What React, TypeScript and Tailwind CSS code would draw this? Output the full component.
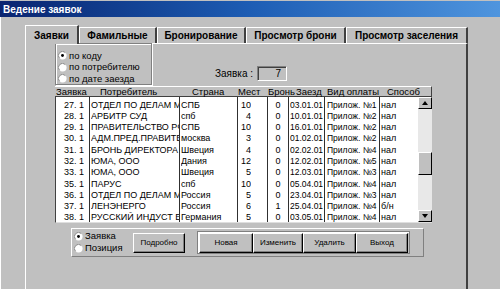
const rows = [
  ['27. 1', 'ОТДЕЛ ПО ДЕЛАМ МОЛОДЕЖИ', 'СПБ', '10', '0', '03.01.01', 'Прилож. №1', 'нал'],
  ['28. 1', 'АРБИТР СУД', 'спб', '4', '0', '10.01.01', 'Прилож. №2', 'нал'],
  ['29. 1', 'ПРАВИТЕЛЬСТВО РФ', 'СПБ', '10', '0', '16.01.01', 'Прилож. №2', 'нал'],
  ['30. 1', 'АДМ.ПРЕД.ПРАВИТЕЛЬСТВА', 'москва', '3', '0', '01.02.01', 'Прилож. №2', 'нал'],
  ['31. 1', 'БРОНЬ ДИРЕКТОРА', 'Швеция', '4', '0', '02.02.01', 'Прилож. №4', 'нал'],
  ['32. 1', 'ЮМА, ООО', 'Дания', '12', '0', '12.02.01', 'Прилож. №5', 'нал'],
  ['33. 1', 'ЮМА, ООО', 'Швеция', '5', '0', '12.03.01', 'Прилож. №3', 'нал'],
  ['35. 1', 'ПАРУС', 'спб', '10', '0', '05.04.01', 'Прилож. №4', 'нал'],
  ['36. 1', 'ОТДЕЛ ПО ДЕЛАМ МОЛОДЕЖИ', 'Россия', '5', '0', '23.04.01', 'Прилож. №3', 'нал'],
  ['37. 1', 'ЛЕНЭНЕРГО', 'Россия', '6', '1', '25.04.01', 'Прилож. №4', 'б/н'],
  ['38. 1', 'РУССКИЙ ИНДУСТ БАНК', 'Германия', '5', '0', '03.05.01', 'Прилож. №4', 'нал'],
]

// body columns: width incl. right line, text alignment
const cols = [
  { w: 'w-[34px]', cls: 'text-right pr-[5px] border-r' },
  { w: 'w-[90px]', cls: 'pl-[1px] border-r' },
  { w: 'w-[58px]', cls: 'pl-[1px] border-r' },
  { w: 'w-[30px]', cls: 'text-right pr-[16px] border-r' },
  { w: 'w-[21px]', cls: 'text-center border-r' },
  { w: 'w-[36px]', cls: 'pl-[1px] border-r text-[8.5px]' },
  { w: 'w-[55px]', cls: 'pl-[2px] border-r text-[8.5px]' },
  { w: 'w-[38px]', cls: 'pl-[1px]' },
]

const Radio = ({ checked }: { checked?: boolean }) => (
  <svg width="9" height="9" viewBox="0 0 10 10" className="shrink-0">
    <circle cx="5" cy="5" r="4.5" fill="#fff" />
    <path d="M1.8 8.2 A4.5 4.5 0 0 1 8.2 1.8" stroke="#808080" fill="none" />
    {checked && <circle cx="5" cy="5" r="1.6" fill="#000" />}
  </svg>
)

const Btn = ({ label, w }: { label: string; w: string }) => (
  <div className={`${w} h-[20px] flex items-center justify-center bg-[#c0c0c0] border border-t-white border-l-white border-r-black border-b-black shadow-[inset_-1px_-1px_0_#808080] text-[8px]`}>
    {label}
  </div>
)

const Arrow = ({ up }: { up?: boolean }) => (
  <div className="h-[12px] w-full flex items-center justify-center bg-[#c0c0c0] border border-t-white border-l-white border-r-black border-b-black">
    <svg width="6" height="4" viewBox="0 0 6 4">
      <path d={up ? 'M0 4 L3 0 L6 4 Z' : 'M0 0 L3 4 L6 0 Z'} fill="#000" />
    </svg>
  </div>
)

export default function App() {
  return (
    <div className="w-[500px] h-[289px] overflow-hidden bg-[#c0c0c0] pt-px font-['Liberation_Sans',Arial,sans-serif] text-black">
      <div className="h-[16px] flex items-center pl-[3px] bg-linear-to-r from-[#0a2470] via-[#1d5db4] to-[#4f95de] text-white font-bold text-[10px]">
        Ведение заявок
      </div>

      <div className="border-l border-white h-full pl-[24px] pt-[8px]">
        {/* tabs */}
        <div className="flex items-end h-[18px] font-bold text-[10px]">
          <div className="w-[54px] h-[19px] -mb-px z-10 relative bg-[#c0c0c0] border-t border-l border-white border-r-2 border-r-[#404040] flex items-center justify-center pt-[1px]">Заявки</div>
          <div className="w-[78px] h-[16px] border-t border-l border-white border-r-2 border-r-[#404040] flex items-center justify-center">Фамильные</div>
          <div className="w-[89px] h-[16px] border-t border-l border-white border-r-2 border-r-[#404040] flex items-center justify-center">Бронирование</div>
          <div className="w-[100px] h-[16px] border-t border-l border-white border-r-2 border-r-[#404040] flex items-center justify-center">Просмотр брони</div>
          <div className="w-[122px] h-[16px] border-t border-l border-white border-r-2 border-r-[#404040] flex items-center justify-center">Просмотр заселения</div>
        </div>

        {/* tab panel */}
        <div className="w-[443px] h-[260px] border-t border-l border-white border-r-2 border-r-[#404040]">
          <div className="flex items-end ml-[29px] -mt-px">
            <div className="w-[97px] h-[42px] border border-[#808080] shadow-[inset_1px_1px_0_#fff,1px_1px_0_#fff] pt-[6px] pl-[2px] text-[9.5px]">
              <div className="h-[11.5px] flex items-center gap-[2px]"><Radio checked />по коду</div>
              <div className="h-[11.5px] flex items-center gap-[2px]"><Radio />по потребителю</div>
              <div className="h-[11.5px] flex items-center gap-[2px]"><Radio />по дате заезда</div>
            </div>
            <div className="ml-[63px] mb-[4px] flex items-center">
              <span className="text-[10px] pt-px">Заявка :</span>
              <div className="ml-[4px] w-[30px] h-[15px] border border-t-[#808080] border-l-[#808080] border-b-white border-r-white shadow-[inset_1px_1px_0_#404040] text-[10px] text-right pr-[5px] leading-[13px]">7</div>
            </div>
          </div>

          {/* table */}
          <div className="ml-[29px] w-[377px] mt-px">
            <div className="h-[10px] flex items-center pt-[2px] text-[9.5px] border-t border-white border-r border-r-[#404040] whitespace-nowrap">
              <span className="w-[45px] pl-[1px]">Заявка</span>
              <span className="w-[92px]">Потребитель</span>
              <span className="w-[46px]">Страна</span>
              <span className="w-[30px]">Мест</span>
              <span className="w-[28px]">Бронь</span>
              <span className="w-[31px]">Заезд</span>
              <span className="w-[60px]">Вид оплаты</span>
              <span>Способ</span>
            </div>
            <div className="h-[127px] flex bg-white border-t border-l border-[#404040] border-b border-b-[#dfdfdf] text-[9px]">
              {cols.map((c, ci) => (
                <div key={ci} className={`${c.w} ${c.cls} border-[#303030] h-full pt-[2.5px] overflow-hidden whitespace-nowrap`}>
                  {rows.map((r, ri) => (
                    <div key={ri} className="h-[11.3px] leading-[11.3px] overflow-hidden">{r[ci]}</div>
                  ))}
                </div>
              ))}
              <div className="w-[14px] h-full flex flex-col bg-[#e8e8e8]">
                <Arrow up />
                <div className="flex-1 pt-[43px]">
                  <div className="h-[23px] bg-[#c0c0c0] border border-t-white border-l-white border-r-black border-b-black" />
                </div>
                <Arrow />
              </div>
            </div>
          </div>

          {/* bottom panel */}
          <div className="ml-[45px] mt-[5px] w-[353px] h-[29px] border border-t-white border-l-white border-b-[#808080] border-r-[#808080] flex items-center">
            <div className="w-[58px] pl-[2px] text-[9.5px]">
              <div className="h-[12px] flex items-center gap-[2px]"><Radio checked />Заявка</div>
              <div className="h-[12px] flex items-center gap-[2px]"><Radio />Позиция</div>
            </div>
            <div className="ml-[3px]"><Btn label="Подробно" w="w-[52px]" /></div>
            <div className="ml-[12px] w-[213px] h-[23px] border border-[#808080] shadow-[inset_1px_1px_0_#fff] flex items-center pl-[1px]">
              <Btn label="Новая" w="w-[54px]" />
              <Btn label="Изменить" w="w-[50px]" />
              <Btn label="Удалить" w="w-[53px]" />
              <Btn label="Выход" w="w-[52px]" />
            </div>
          </div>
        </div>
      </div>
    </div>
  )
}
